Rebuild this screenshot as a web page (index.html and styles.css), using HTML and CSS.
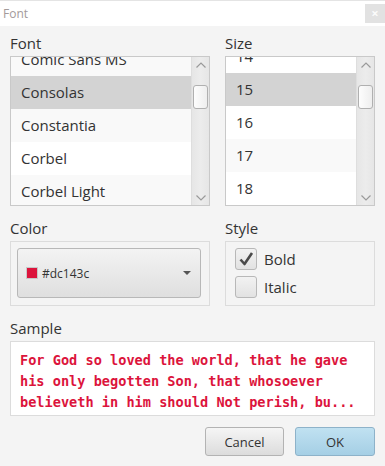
FILE: index.html
```html
<!DOCTYPE html>
<html>
<head>
<meta charset="utf-8">
<link rel="stylesheet" href="styles.css">
</head>
<body>
<div class="window">
  <div class="titlebar">
    <span class="title">Font</span>
    <span class="close">&#215;</span>
  </div>
  <div class="content">
    <div class="label">Font</div>
    <div class="label">Size</div>

    <div class="list">
      <div class="rows">
        <div class="row alt first-font">Comic Sans MS</div>
        <div class="row selected">Consolas</div>
        <div class="row alt">Constantia</div>
        <div class="row">Corbel</div>
        <div class="row alt">Corbel Light</div>
      </div>
      <div class="scrollbar">
        <svg class="arrow" width="12" height="8" viewBox="0 0 12 8"><path d="M1.5 6.5 L6 2 L10.5 6.5" fill="none" stroke="#9a9a9a" stroke-width="1.2"/></svg>
        <div class="thumb"></div>
        <div class="spacer"></div>
        <svg class="arrow" width="12" height="8" viewBox="0 0 12 8"><path d="M1.5 1.5 L6 6 L10.5 1.5" fill="none" stroke="#9a9a9a" stroke-width="1.2"/></svg>
      </div>
    </div>

    <div class="list">
      <div class="rows">
        <div class="row first-size">14</div>
        <div class="row selected">15</div>
        <div class="row">16</div>
        <div class="row alt">17</div>
        <div class="row">18</div>
      </div>
      <div class="scrollbar">
        <svg class="arrow" width="12" height="8" viewBox="0 0 12 8"><path d="M1.5 6.5 L6 2 L10.5 6.5" fill="none" stroke="#9a9a9a" stroke-width="1.2"/></svg>
        <div class="thumb"></div>
        <div class="spacer"></div>
        <svg class="arrow" width="12" height="8" viewBox="0 0 12 8"><path d="M1.5 1.5 L6 6 L10.5 1.5" fill="none" stroke="#9a9a9a" stroke-width="1.2"/></svg>
      </div>
    </div>

    <div class="label section">Color</div>
    <div class="label section">Style</div>

    <div class="group color-group">
      <div class="combo">
        <span class="swatch"></span>
        <span class="combo-text">#dc143c</span>
        <span class="caret"></span>
      </div>
    </div>

    <div class="group style-group">
      <div class="check-row">
        <span class="checkbox">
          <svg width="18" height="18" viewBox="0 0 18 18"><path d="M3.5 9.5 L7.5 14 L15 3" fill="none" stroke="#4a4a4a" stroke-width="2.6" stroke-linejoin="round"/></svg>
        </span>
        <span class="check-label">Bold</span>
      </div>
      <div class="check-row">
        <span class="checkbox"></span>
        <span class="check-label">Italic</span>
      </div>
    </div>

    <div class="label section wide">Sample</div>
    <div class="sample wide">For God so loved the world, that he gave<br>his only begotten Son, that whosoever<br>believeth in him should Not perish, bu...</div>

    <div class="buttons wide">
      <button class="btn cancel">Cancel</button>
      <button class="btn ok">OK</button>
    </div>
  </div>
</div>
</body>
</html>
```
FILE: styles.css
```css
* { box-sizing: border-box; }
html, body { margin: 0; padding: 0; }
body {
  width: 385px;
  height: 466px;
  background: #f4f4f4;
  font-family: "Open Sans", "Noto Sans", sans-serif;
  color: #333;
  overflow: hidden;
}
.window { width: 385px; height: 466px; display: flex; flex-direction: column; }
.titlebar {
  height: 26px;
  background: #fff;
  border-top: 1px solid #e4e4e4;
  display: flex;
  align-items: center;
  justify-content: space-between;
  padding: 0 0 0 3px;
}
.title { font-size: 12px; color: #a39a9a; }
.close {
  width: 20px;
  height: 19px;
  margin-top: 0px;
  background: #e2e2e2;
  color: #fbfbfb;
  font-size: 13px;
  line-height: 19px;
  text-align: center;
  font-weight: bold;
}
.content {
  padding: 7px 10px 10px 10px;
  display: grid;
  grid-template-columns: 200px 150px;
  column-gap: 15px;
  align-content: start;
}
.label {
  font-size: 15px;
  line-height: 20px;
  height: 20px;
  color: #333;
  margin-bottom: 3px;
}
.label.section { margin-top: 12px; }
.wide { grid-column: 1 / span 2; }

.list {
  height: 150px;
  border: 1px solid #c9c9c9;
  background: #fff;
  display: flex;
  overflow: hidden;
}
.rows { flex: 1; overflow: hidden; }
.row {
  height: 33px;
  line-height: 33px;
  font-size: 15px;
  padding-left: 10px;
  color: #333;
  background: #fff;
  white-space: nowrap;
}
.row.alt { background: #f9f9f9; }
.row.selected { background: #d3d3d3; }
.first-font { margin-top: -14px; }
.first-size { margin-top: -17px; }

.scrollbar {
  width: 18px;
  background: linear-gradient(to right, #e6e6e6, #ececec 50%, #e6e6e6);
  border-left: 1px solid #dedede;
  display: flex;
  flex-direction: column;
  align-items: center;
  padding: 3px 0 2px;
}
.arrow { display: block; margin: 1px 0; }
.thumb {
  margin-top: 15px;
  width: 15px;
  height: 24px;
  border: 1px solid #b0b0b0;
  border-radius: 3px;
  background: linear-gradient(to right, #fdfdfd, #eeeeee);
}
.spacer { flex: 1; }

.group {
  height: 65px;
  border: 1px solid #dcdcdc;
}
.color-group { padding: 6px 8px 8px 6px; }
.combo {
  height: 50px;
  border: 1px solid #b8b8b8;
  border-radius: 3px;
  background: linear-gradient(to bottom, #f3f3f3, #dfdfdf);
  display: flex;
  align-items: center;
  padding: 0 9px 0 8px;
}
.swatch {
  width: 12px;
  height: 12px;
  background: #dc143c;
  border: 1px solid #c8c8c8;
  margin-right: 4px;
}
.combo-text { font-size: 12px; color: #333; flex: 1; }
.caret {
  width: 0;
  height: 0;
  border-left: 4px solid transparent;
  border-right: 4px solid transparent;
  border-top: 4px solid #555;
}
.style-group {
  padding: 6px 9px;
  display: flex;
  flex-direction: column;
  gap: 6px;
}
.check-row { display: flex; align-items: center; height: 22px; }
.checkbox {
  width: 22px;
  height: 22px;
  border: 1px solid #b8b8b8;
  border-radius: 3px;
  background: linear-gradient(to bottom, #f2f2f2, #e2e2e2);
  display: flex;
  align-items: center;
  justify-content: center;
  margin-right: 7px;
}
.checkbox svg { display: block; }
.check-label { font-size: 15px; color: #333; }

.sample {
  height: 75px;
  background: #fff;
  border: 1px solid #dcdcdc;
  padding: 8px 9px;
  font-family: "DejaVu Sans Mono", "Liberation Mono", monospace;
  font-weight: bold;
  font-size: 13.6px;
  line-height: 21px;
  color: #dc143c;
  white-space: nowrap;
  overflow: hidden;
}
.buttons {
  margin-top: 11px;
  display: flex;
  justify-content: flex-end;
  gap: 11px;
}
.btn {
  height: 29px;
  border-radius: 3px;
  font-family: "Open Sans", "Noto Sans", sans-serif;
  font-size: 13px;
  color: #333;
  padding: 0;
}
.cancel {
  width: 79px;
  border: 1px solid #b3b3b3;
  background: linear-gradient(to bottom, #f5f5f5, #dcdcdc);
}
.ok {
  width: 80px;
  border: 1px solid #8db2c9;
  background: linear-gradient(to bottom, #c0e1f1, #a5cfe5);
}
```
